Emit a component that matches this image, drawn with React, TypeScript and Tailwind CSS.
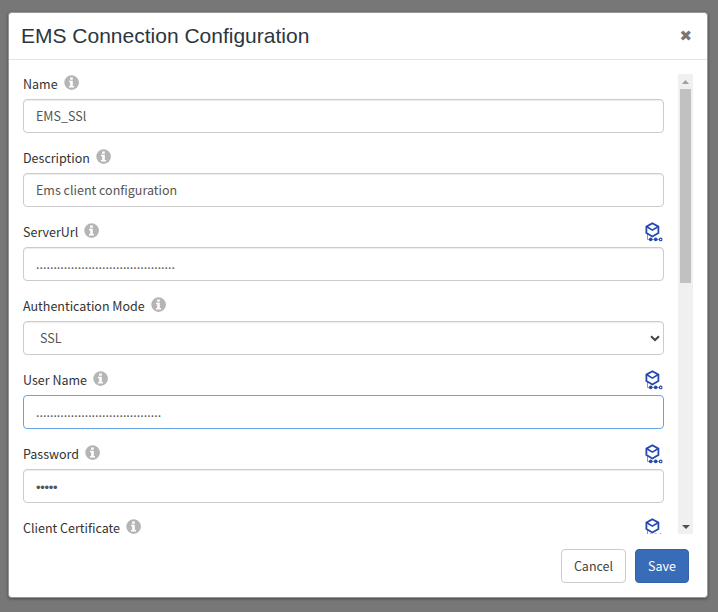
import React from 'react';

function InfoIcon() {
  return (
    <svg className="block h-[15px] w-[15px] shrink-0" viewBox="0 0 15 15">
      <circle cx="7.6" cy="7.6" r="7.35" fill="#b5b5b5" />
      <path d="M6.1 2.6h2.7v2.2H6.1zM5 5.8h3.8v5.1H10v1.5H5v-1.5h1.2V7.3H5z" fill="#fff" />
    </svg>
  );
}

function CubeIcon() {
  return (
    <svg className="mr-px block h-5 w-[18px] shrink-0" viewBox="0 0 18 20" fill="none" stroke="#2349ae">
      <path d="M7.4 1.3 13.4 4.6V11L7.4 14.5 1.4 11V4.6z" strokeWidth="1.8" />
      <path d="M1.9 4.8 7.4 8.1 12.9 4.8" strokeWidth="1.6" />
      <path d="M2.5 12v5.4h12" strokeWidth="0.6" />
      <circle cx="5.7" cy="17.4" r="1.8" fill="#2349ae" stroke="none" />
      <circle cx="10.7" cy="17.4" r="1.8" fill="#2349ae" stroke="none" />
      <circle cx="15.7" cy="17.4" r="1.3" fill="#fff" strokeWidth="1.1" />
    </svg>
  );
}

type FieldProps = {
  label: string;
  cube?: boolean;
  focused?: boolean;
  children?: React.ReactNode;
};

function Field({ label, cube, focused, children }: FieldProps) {
  return (
    <div className="mb-[15px] shrink-0">
      <div className="flex h-[25px] items-start justify-between">
        <div className="flex items-start">
          <span className="mr-1.5 mt-1 h-3 whitespace-nowrap text-[12.5px] leading-3 text-[#333]">{label}</span>
          <div className="mt-[1px]"><InfoIcon /></div>
        </div>
        {cube && <CubeIcon />}
      </div>
      <div
        className={
          focused
            ? 'flex h-[34px] items-center rounded-[4px] border border-[#66a3e8] px-3 text-[12.5px] text-[#555]'
            : 'flex h-[34px] items-center rounded-[4px] border border-[#ccc] px-3 text-[12.5px] text-[#555] shadow-[inset_0_1px_1px_rgba(0,0,0,0.075)]'
        }
      >
        {children}
      </div>
    </div>
  );
}

export default function App() {
  return (
    <div className="h-[612px] w-[718px] overflow-hidden bg-[#777] pl-2 pt-3 font-['Noto_Sans_CJK_SC',sans-serif]">
      <div className="flex h-[586px] w-[700px] flex-col rounded-[3px] border border-[#999] bg-white bg-clip-padding shadow-[0_1px_3px_rgba(0,0,0,0.4)]">
        <header className="flex h-[47px] shrink-0 items-center justify-between border-b border-[#e5e5e5] pl-3 pr-[15px]">
          <h1 className="font-['Liberation_Sans',Arial,sans-serif] text-[21px] leading-6 text-[#2c3640]">EMS Connection Configuration</h1>
          <button className="-mt-px font-['DejaVu_Sans',sans-serif] text-[15px] leading-5 text-[#777]">✖</button>
        </header>
        <div className="mt-[14px] flex h-[460px] shrink-0 justify-between pl-[14px] pr-[14px]">
          <div className="flex w-[641px] flex-col overflow-hidden">
            <Field label="Name">EMS_SSl</Field>
            <Field label="Description">Ems client configuration</Field>
            <Field label="ServerUrl" cube>
              <span>........................................</span>
            </Field>
            <Field label="Authentication Mode">
              <span className="flex-1 pl-1">SSL</span>
              <svg className="-mr-[9px] h-[7px] w-[10px]" viewBox="0 0 10 7" fill="none" stroke="#444" strokeWidth="2">
                <path d="M1 1.2 5 5 9 1.2" />
              </svg>
            </Field>
            <Field label="User Name" cube focused>
              <span>....................................</span>
            </Field>
            <Field label="Password" cube>
              <span className="mt-1 font-['Liberation_Sans',Arial,sans-serif] text-[13px] tracking-[-0.3px]">•••••</span>
            </Field>
            <Field label="Client Certificate" cube />
          </div>
          <div className="flex w-[15px] flex-col items-center bg-[#f0f0f0]">
            <div className="flex h-[15px] shrink-0 items-center">
              <svg className="h-1 w-[7px]" viewBox="0 0 7 4"><path d="M3.5 0 7 4H0z" fill="#a0a0a0" /></svg>
            </div>
            <div className="h-[194px] w-[11px] bg-[#c1c1c1]" />
            <div className="mt-auto flex h-[15px] shrink-0 items-center">
              <svg className="h-1 w-[8px]" viewBox="0 0 8 4"><path d="M0 0h8L4 4z" fill="#505050" /></svg>
            </div>
          </div>
        </div>
        <footer className="mt-[15px] flex justify-end gap-[9px] pr-[18px]">
          <button className="h-[34px] w-[65px] rounded-[4px] border border-[#ccc] bg-white text-[12.5px] text-[#444]">Cancel</button>
          <button className="h-[34px] w-[54px] rounded-[4px] border border-[#3362a8] bg-[#386cb8] text-[12.5px] text-white">Save</button>
        </footer>
      </div>
    </div>
  );
}
